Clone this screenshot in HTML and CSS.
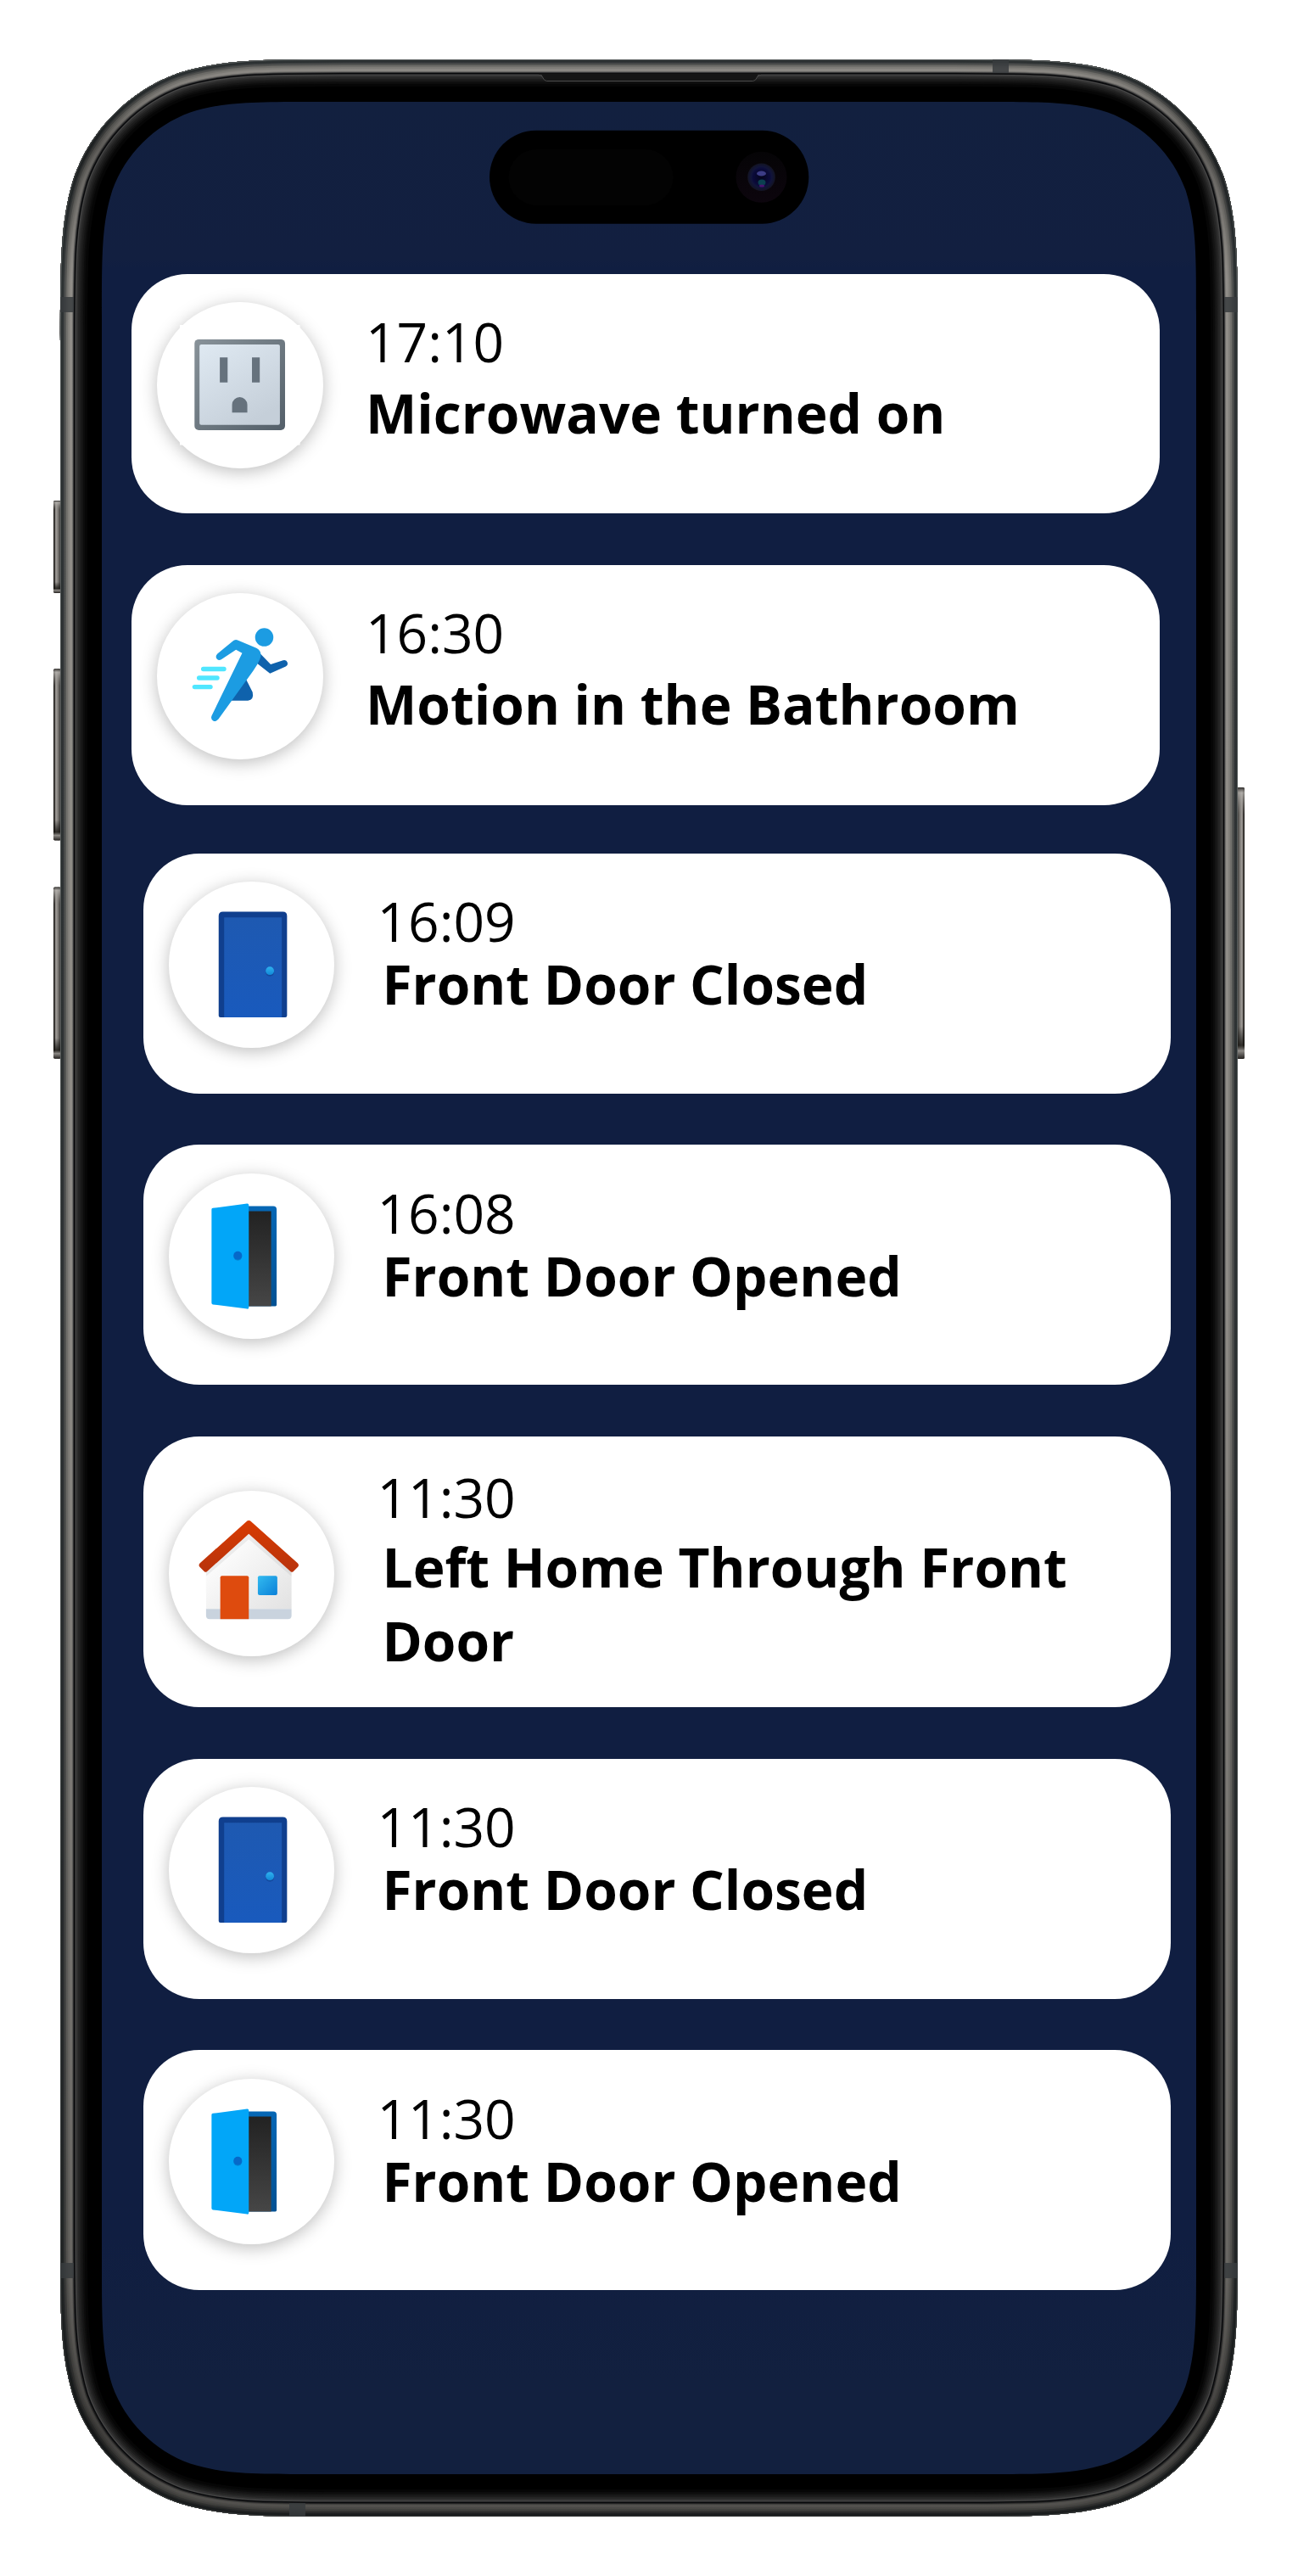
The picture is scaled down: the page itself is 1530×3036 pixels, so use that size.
FILE: index.html
```html
<!DOCTYPE html>
<html lang="en">
<head>
<meta charset="utf-8">
<title>Home activity</title>
<link rel="stylesheet" href="styles.css">
</head>
<body>
<div class="phone">
  <svg class="device" viewBox="0 0 1530 3036" aria-hidden="true">
    <defs>
      <path id="body" d="M405.8 70H1124.2c96.4 0 144.6 0 196.5 16.4c56.7 20.6 101.3 65.2 121.9 121.9c16.4 51.9 16.4 100.1 16.4 196.5V2631.2c0 96.4 0 144.6-16.4 196.5c-20.6 56.7-65.2 101.3-121.9 121.9c-51.9 16.4-100.1 16.4-196.5 16.4H405.8c-96.4 0-144.6 0-196.5-16.4c-56.7-20.6-101.3-65.2-121.9-121.9c-16.4-51.9-16.4-100.1-16.4-196.5V404.8c0-96.4 0-144.6 16.4-196.5c20.6-56.7 65.2-101.3 121.9-121.9c51.9-16.4 100.1-16.4 196.5-16.4z"/>
      <clipPath id="bodyClip"><use href="#body"/></clipPath>
      <linearGradient id="shade" x1="0" y1="0" x2="0" y2="1">
        <stop offset="0" stop-color="#000" stop-opacity="0"/>
        <stop offset=".5" stop-color="#000" stop-opacity=".02"/>
        <stop offset="1" stop-color="#000" stop-opacity=".35"/>
      </linearGradient>
      <linearGradient id="cornerShade" x1="0" y1="0" x2="0" y2="1">
        <stop offset="0" stop-color="#000" stop-opacity="0"/>
        <stop offset=".035" stop-color="#000" stop-opacity=".35"/>
        <stop offset=".09" stop-color="#000" stop-opacity="0"/>
        <stop offset=".9" stop-color="#000" stop-opacity="0"/>
        <stop offset=".965" stop-color="#000" stop-opacity=".35"/>
        <stop offset="1" stop-color="#000" stop-opacity=".1"/>
      </linearGradient>
      <linearGradient id="wall" x1="0" y1="0" x2="0" y2="1">
        <stop offset="0" stop-color="#12203f"/>
        <stop offset=".066" stop-color="#121f40"/>
        <stop offset=".07" stop-color="#101e41"/>
        <stop offset=".9" stop-color="#101e41"/>
        <stop offset=".96" stop-color="#12203f"/>
      </linearGradient>
      <linearGradient id="key" x1="0" y1="0" x2="1" y2="0">
        <stop offset="0" stop-color="#1d1b19"/>
        <stop offset=".16" stop-color="#3d3a37"/>
        <stop offset=".32" stop-color="#a5a19d"/>
        <stop offset=".55" stop-color="#84817d"/>
        <stop offset=".85" stop-color="#4b4946"/>
        <stop offset="1" stop-color="#2e2c2a"/>
      </linearGradient>
      <linearGradient id="keyEnds" x1="0" y1="0" x2="0" y2="1">
        <stop offset="0" stop-color="#2b2927"/>
        <stop offset=".02" stop-color="#bab7b3" stop-opacity=".7"/>
        <stop offset=".1" stop-color="#8a8783" stop-opacity="0"/>
        <stop offset=".88" stop-color="#000" stop-opacity="0"/>
        <stop offset=".95" stop-color="#15130f" stop-opacity=".8"/>
        <stop offset=".97" stop-color="#8d8a86"/>
        <stop offset="1" stop-color="#24211f"/>
      </linearGradient>
      <radialGradient id="lens" cx=".5" cy=".5" r=".5">
        <stop offset="0" stop-color="#05051c"/>
        <stop offset=".6" stop-color="#0a0a3a"/>
        <stop offset=".75" stop-color="#11143a"/>
        <stop offset="1" stop-color="#131422"/>
      </radialGradient>
      <linearGradient id="camera" x1="0" y1="0" x2="0" y2="1">
        <stop offset="0" stop-color="#050406"/>
        <stop offset="1" stop-color="#0c050d"/>
      </linearGradient>
    </defs>

    <g id="keys">
      <g fill="url(#key)">
        <rect x="63" y="590" width="9" height="109" rx="2"/>
        <rect x="63" y="788.300" width="9" height="202.300" rx="2"/>
        <rect x="63" y="1045.400" width="9" height="202.300" rx="2"/>
        <rect x="63" y="928" width="9" height="320" rx="2" transform="matrix(-1 0 0 1 1530 0)"/>
      </g>
      <g fill="url(#keyEnds)">
        <rect x="63" y="590" width="9" height="109" rx="2"/>
        <rect x="63" y="788.300" width="9" height="202.300" rx="2"/>
        <rect x="63" y="1045.400" width="9" height="202.300" rx="2"/>
        <rect x="1458" y="928" width="9" height="320" rx="2"/>
      </g>
    </g>

    <!-- Metal rim: concentric bands from the inside of the bezel outwards -->
    <use href="#body" fill="#000"/>
    <g clip-path="url(#bodyClip)" fill="none">
      <use href="#body" stroke="#060606" stroke-width="64"/>
      <use href="#body" stroke="#0c0c0c" stroke-width="58"/>
      <use href="#body" stroke="#141414" stroke-width="54"/>
      <use href="#body" stroke="#1c1c1c" stroke-width="50"/>
      <use href="#body" stroke="#252525" stroke-width="46"/>
      <use href="#body" stroke="#303030" stroke-width="42"/>
      <use href="#body" stroke="#434343" stroke-width="38"/>
      <use href="#body" stroke="#08090b" stroke-width="35"/>
      <use href="#body" stroke="#3b3b3c" stroke-width="32"/>
      <use href="#body" stroke="#706f6c" stroke-width="30"/>
      <use href="#body" stroke="#918e89" stroke-width="28"/>
      <use href="#body" stroke="#83817c" stroke-width="22"/>
      <use href="#body" stroke="#72716d" stroke-width="18"/>
      <use href="#body" stroke="#545553" stroke-width="14"/>
      <use href="#body" stroke="#3e4142" stroke-width="10"/>
      <use href="#body" stroke="#2c3132" stroke-width="7"/>
      <use href="#body" stroke="#565b5b" stroke-width="2"/>
      <use href="#body" stroke="url(#shade)" stroke-width="32"/>
      <use href="#body" stroke="url(#cornerShade)" stroke-width="32"/>
      <g fill="#383c3e" fill-opacity=".85">
        <rect x="71" y="350" width="16" height="18"/>
        <rect x="1443" y="350" width="16" height="18"/>
        <rect x="71" y="2667" width="16" height="18"/>
        <rect x="1443" y="2667" width="16" height="18"/>
        <rect x="1170" y="70" width="19" height="16"/>
        <rect x="341" y="2950" width="19" height="16"/>
      </g>
    </g>
    <path d="M635 88h3q1 0 2 3q2 4.500 5 4.500H887q3 0 5-4.500q1-3 2-3h3V86.500H635z" fill="#151515"/>
    <path d="M635 88.500h1.500q2 0 3 2.500q2 4.500 5 4.500H887.500q3 0 5-4.500q1-2.500 3-2.500h1.500" fill="none" stroke="#4a4a4a"/>

    <path fill="url(#wall)" d="M372.200 120H1157.800c72.600 0 108.900 0 148 12.400c42.700 15.500 76.300 49.100 91.800 91.800c12.400 39.100 12.400 75.400 12.400 148V2663.800c0 72.600 0 108.900-12.400 148c-15.500 42.700-49.100 76.300-91.800 91.800c-39.100 12.400-75.400 12.400-148 12.400H372.200c-72.600 0-108.900 0-148-12.400c-42.700-15.500-76.300-49.100-91.800-91.800c-12.400-39.100-12.400-75.400-12.400-148V372.200c0-72.600 0-108.900 12.400-148c15.500-42.700 49.100-76.300 91.800-91.800c39.100-12.400 75.400-12.400 148-12.400z"/>

    <rect x="577" y="153.700" width="376.300" height="110" rx="55" fill="#000"/>
    <rect x="599.500" y="176" width="194" height="66" rx="33" fill="#030303"/>
    <circle cx="897.500" cy="208.700" r="30" fill="url(#camera)"/>
    <circle cx="897.500" cy="208.700" r="16.300" fill="url(#lens)"/>
    <ellipse cx="897.500" cy="204.500" rx="5.500" ry="3" fill="#3c3c86"/>
    <ellipse cx="898" cy="215" rx="4.500" ry="3.500" fill="#0b4050"/>
    <ellipse cx="898" cy="219" rx="3" ry="1.500" fill="#4a1270"/>
  </svg>

  <svg width="0" height="0" class="symbols" aria-hidden="true">
    <defs>
      <linearGradient id="doorFill" x1="0" y1="0" x2="0" y2="1"><stop offset="0" stop-color="#1e59b1"/><stop offset="1" stop-color="#195abd"/></linearGradient>
      <linearGradient id="knobFill" x1="0" y1="0" x2="0" y2="1"><stop offset="0" stop-color="#2fb1ee"/><stop offset="1" stop-color="#1188d8"/></linearGradient>
      <linearGradient id="darkFill" x1="0" y1="0" x2="0" y2="1"><stop offset="0" stop-color="#222"/><stop offset="1" stop-color="#464646"/></linearGradient>
      <linearGradient id="jambFill" x1="0" y1="0" x2="0" y2="1"><stop offset="0" stop-color="#0667b5"/><stop offset="1" stop-color="#025193"/></linearGradient>
    </defs>
    <symbol id="door-closed" viewBox="0 0 196 196">
      <path d="M64 35.700h70.700q5 0 5 5V158.500q0 2-2 2H60.900q-2 0-2-2V40.700q0-5 5.100-5z" fill="#103f8e"/>
      <path d="M65.400 42.400h68.100v118H65.400z" fill="url(#doorFill)"/>
      <circle cx="119.400" cy="107" r="5" fill="#103f8e" opacity=".6"/>
      <circle cx="119.400" cy="105.500" r="4.900" fill="url(#knobFill)"/>
    </symbol>
    <symbol id="door-open" viewBox="0 0 196 196">
      <path d="M90 38.600h33.400q4 0 4 4V155.500q0 1.500-1.500 1.500H90z" fill="url(#jambFill)"/>
      <path d="M90 44.600h30.900V157H90z" fill="url(#darkFill)"/>
      <path d="M52 40.900L92.500 35.700q2-.2 2 1.800V158.300q0 2-2 1.700L52 154.800q-1.500-.3-1.500-2V42.500q0-1.400 1.500-1.600z" fill="#02a6f8"/>
      <circle cx="81.500" cy="98" r="5" fill="#0475be" opacity=".6"/>
      <circle cx="81.500" cy="97" r="5" fill="#0669c9"/>
    </symbol>
  </svg>

  <main class="feed">
    <article class="card">
      <div class="badge">
        <svg viewBox="0 0 196 196">
          <defs>
            <linearGradient id="plateEdge" x1="0" y1="0" x2="1" y2="1"><stop offset="0" stop-color="#889299"/><stop offset="1" stop-color="#535f69"/></linearGradient>
            <linearGradient id="plate" x1="0" y1="0" x2=".6" y2="1"><stop offset="0" stop-color="#dfe9f2"/><stop offset="1" stop-color="#c5cfd9"/></linearGradient>
          </defs>
          <path d="M27 27h142v142H27z" fill="#fff"/>
          <rect x="44.400" y="44" width="107" height="107.300" rx="5" fill="url(#plateEdge)"/>
          <rect x="50.300" y="50.200" width="95" height="95" rx="2" fill="url(#plate)"/>
          <path d="M74.300 65.300h9.200V95h-9.200zM112.300 65.300h9.200V95h-9.200zM88.800 130.700v-9.400a9 9 0 0 1 18 0v9.400z" fill="#66727d"/>
        </svg>
      </div>
      <div class="text">
        <time>17:10</time>
        <h2>Microwave turned on</h2>
      </div>
    </article>

    <article class="card">
      <div class="badge">
        <svg viewBox="0 0 196 196">
          <path d="M122.500 72L134.400 84.300L149 79.500q4-1.200 5.200 2.500q1 3-2 4.800L133.600 95L117 82zM104.900 101L113 117q2 9-5.500 10H84z" fill="#0f62ac"/>
          <path d="M89.500 56.800q2.600-2.500 6.500-1L117.500 65q8 4.500 4 13.500Q119 84.500 114 91.500L72.700 149q-3 3.600-6.300 1.800q-3.200-1.800-1.800-5.800L100.700 71L93.400 67L76 78.500q-3 1.600-5-.5q-2.600-3.200.5-6.300z" fill="#1c9ce2"/>
          <circle cx="126.800" cy="52.200" r="10.800" fill="#1c9ce2"/>
          <path d="M54.800 89.700h24.400M49.800 100.300h21.400M44.500 110.900h18.700" stroke="#50e6ff" stroke-width="5.400" stroke-linecap="round"/>
        </svg>
      </div>
      <div class="text">
        <time>16:30</time>
        <h2>Motion in the Bathroom</h2>
      </div>
    </article>

    <article class="card inset">
      <div class="badge"><svg viewBox="0 0 196 196"><use href="#door-closed"/></svg></div>
      <div class="text">
        <time>16:09</time>
        <h2>Front Door Closed</h2>
      </div>
    </article>

    <article class="card inset">
      <div class="badge"><svg viewBox="0 0 196 196"><use href="#door-open"/></svg></div>
      <div class="text">
        <time>16:08</time>
        <h2>Front Door Opened</h2>
      </div>
    </article>

    <article class="card inset tall">
      <div class="badge">
        <svg viewBox="0 0 196 196">
          <defs>
            <linearGradient id="walls" x1="0" y1="0" x2="1" y2="1"><stop offset=".2" stop-color="#fdfdfd"/><stop offset="1" stop-color="#e2e2e2"/></linearGradient>
            <linearGradient id="roof" x1="0" y1="0" x2="0" y2="1"><stop offset="0" stop-color="#d83b01"/><stop offset="1" stop-color="#b8330c"/></linearGradient>
            <linearGradient id="pane" x1="0" y1="0" x2="1" y2="1"><stop offset="0" stop-color="#33bbf0"/><stop offset="1" stop-color="#0a80d8"/></linearGradient>
          </defs>
          <path d="M94.500 49L145 96V139.700H44V96z" fill="url(#walls)"/>
          <path d="M44 139.700H145V147.500q0 4.200-4.200 4.200H48.200Q44 151.700 44 147.500z" fill="#c9d3de"/>
          <path d="M94.500 51L44 96v5L94.500 57.500L145 101v-5z" fill="#000" opacity=".06"/>
          <path d="M91.500 36.500q3-2.600 6 0L152.200 85.500q2.200 2.200.3 4.500L147 95.500q-1.500 1.200-3 0L94.500 51L45 95.500q-1.500 1.200-3 0L36.500 90q-1.900-2.300.3-4.500z" fill="url(#roof)"/>
          <path d="M60.800 102.400q0-2 2-2H92.500q2 0 2 2V151.700H60.800z" fill="#de4b0e"/>
          <rect x="105.200" y="100.400" width="23" height="23" rx="2" fill="url(#pane)"/>
        </svg>
      </div>
      <div class="text">
        <time>11:30</time>
        <h2>Left Home Through Front Door</h2>
      </div>
    </article>

    <article class="card inset">
      <div class="badge"><svg viewBox="0 0 196 196"><use href="#door-closed"/></svg></div>
      <div class="text">
        <time>11:30</time>
        <h2>Front Door Closed</h2>
      </div>
    </article>

    <article class="card inset">
      <div class="badge"><svg viewBox="0 0 196 196"><use href="#door-open"/></svg></div>
      <div class="text">
        <time>11:30</time>
        <h2>Front Door Opened</h2>
      </div>
    </article>
  </main>
</div>
</body>
</html>
```
FILE: styles.css
```css
* {
  box-sizing: border-box;
}

body {
  margin: 0;
  background: #fff;
  color: #000;
  font-family: "Open Sans", "Noto Sans", sans-serif;
}

.phone {
  display: grid;
  width: 1530px;
  height: 3036px;
}

.device,
.feed {
  grid-area: 1 / 1;
}

.device {
  display: block;
  width: 1530px;
  height: 3036px;
}

.symbols {
  grid-area: 1 / 1;
}

.feed {
  z-index: 1;
  display: flex;
  flex-direction: column;
  gap: 60.7px;
  padding: 322.8px 0 0 155.3px;
}

.card {
  display: flex;
  align-items: flex-start;
  flex: none;
  width: 1211.5px;
  height: 282.7px;
  padding: 33.3px 30px 0;
  border-radius: 66px;
  background: #fff;
}

.card.inset {
  margin-left: 13.5px;
}

.card:not(.inset) + .card.inset {
  margin-top: -3.6px;
}

.card.tall {
  height: 319.7px;
  padding-top: 63.8px;
}

.badge {
  flex: none;
  width: 195.5px;
  height: 195.5px;
  border-radius: 50%;
  background: #fff;
  box-shadow: 0 4px 20px rgba(0, 0, 0, .26);
}

.badge svg {
  display: block;
  width: 100%;
  height: 100%;
}

.text {
  flex: 1;
  padding: 3px 0 0 50.2px;
}

.text time,
.text h2 {
  display: block;
  margin: 0;
  font-size: 64px;
  line-height: 87px;
}

.text time {
  font-weight: 400;
}

.text h2 {
  margin-top: -3px;
  font-weight: 700;
}

.inset .text h2 {
  margin: -13px 0 0 6px;
}

.tall .text {
  margin-top: -35.5px;
  padding-top: 0;
}

.tall .text h2 {
  margin-top: -5px;
}
```
